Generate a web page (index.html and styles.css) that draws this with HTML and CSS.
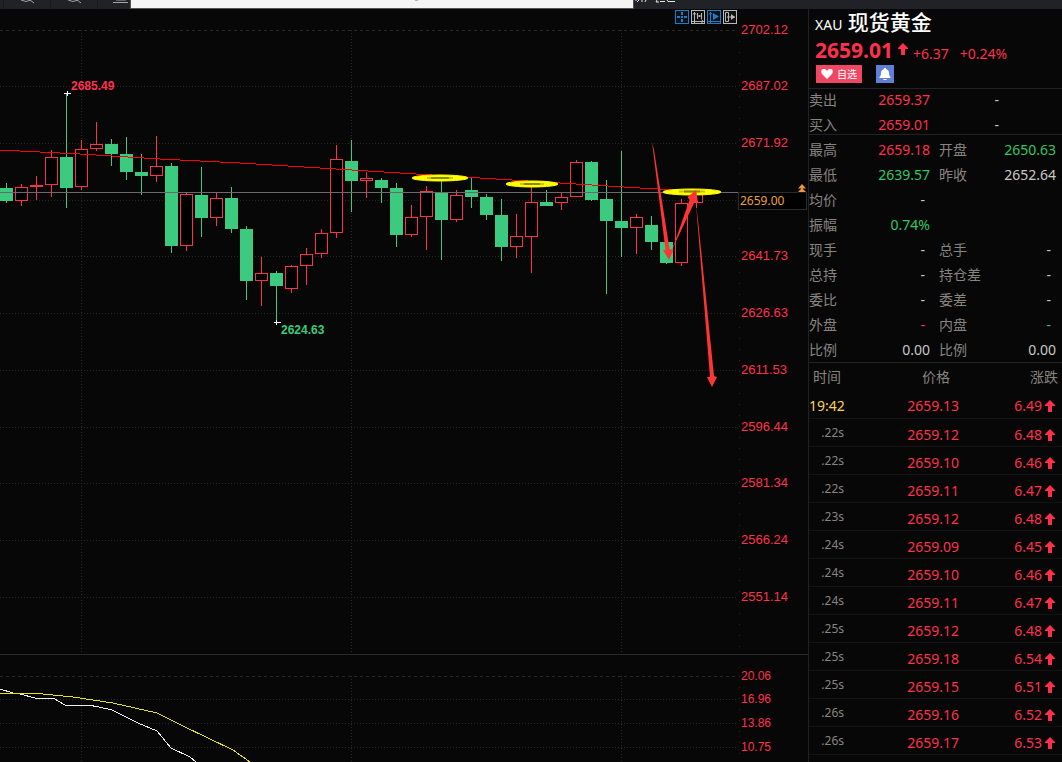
FILE: index.html
```html
<!DOCTYPE html>
<html lang="zh-CN">
<head>
<meta charset="utf-8">
<meta name="viewport" content="width=device-width, initial-scale=1">
<title>XAU 现货黄金</title>
<link rel="stylesheet" href="styles.css">
</head>
<body>
<header class="toolbar">
  <svg class="tools" width="130" height="9" viewBox="0 0 130 9" aria-hidden="true">
    <path class="tool-divider" d="M3.500 0V9M50.500 0V9M97.500 0V9"/>
    <path class="tool-icon" d="M21 0Q26 3 31 0M30 0L34 3M68 0Q73 3 78 0M77 0L81 3M113 2.500H128M116 0H126"/>
  </svg>
  <div class="address"><svg width="8" height="2" aria-hidden="true"><path d="M2 0H5" stroke="#777" fill="none"/></svg></div>
  <svg class="glyph-edge" width="44" height="9" viewBox="0 0 44 9" aria-hidden="true">
    <path d="M2 0V1M5 0L3 2M8 0V2M12 0L11 2M23 0L22 2H25M26 1.500H31M33 0L34 1.500H41" fill="none" stroke="#e8e8e8"/>
  </svg>
</header>
<main class="workspace">
  <section class="chart" aria-label="K线图">
    <svg class="plot" viewBox="0 9 808 753" preserveAspectRatio="xMinYMin meet">
      <g class="grid">
        <path class="dashed" d="M0 30.500H738M0 676.500H738"/>
        <path class="dotted" d="M0 86.500H738M0 143.500H738M0 200.500H738M0 256.500H738M0 313.500H738M0 370.500H738M0 427.500H738M0 483.500H738M0 540.500H738M0 597.500H738M0 699.500H738M0 723.500H738M0 747.500H738"/>
        <path class="dotted" d="M81.500 30V654M351.500 30V654M621.500 30V654M81.500 676V762M351.500 676V762M621.500 676V762"/>
        <path class="sparse" d="M739.500 30V654M739.500 676V762"/>
        <path class="split" d="M0 654.500H808"/>
      </g>
      <g id="candles"></g>
      <polyline class="average" points="0,150 80,154 160,159 240,163 320,168 400,173 560,183 640,188 738,193"/>
      <path class="cross-line" d="M0 192.500H738"/>
      <polyline class="line-fast" points="0,689 13,693 20,694 35,698 53,698 65,705 88,705 99,707 112,710 138,723 157,731 171,748 190,757 196,762"/>
      <polyline class="line-slow" points="0,693 28,693 43,694 73,697 113,703 157,713 183,726 233,750 250,762"/>
      <path class="marker" d="M64 93.500H71M67.500 91V96M274 322.500H281M276.500 320V325"/>
      <text class="peak rise" x="71" y="90">2685.49</text>
      <text class="peak fall" x="281" y="334">2624.63</text>
      <g class="highlight">
        <ellipse cx="440" cy="178" rx="28" ry="3"/><ellipse cx="532" cy="184" rx="26" ry="3"/><ellipse cx="692" cy="192" rx="29" ry="3"/>
        <path d="M427 178H453M520 184H544M679 191.500H705"/>
        <path class="core" d="M431 178H449M524 184H540M684 191.500H700"/>
      </g>
      <path class="arrow" d="M652 142L654 150L669.500 249L673.500 250L669 260L663 250L665.500 250ZM672 250L689.500 200L687.500 197L696 190L698 202L694.500 202ZM696 204L698 220L714 376L717 377L712 387L707 377L710 377Z"/>
      <path class="price-box" d="M738.500 192.500H806V209.500H738.500Z"/>
      <text class="last" x="740" y="205">2659.00</text>
      <path class="chevron" d="M798 188.500L802 184L806 188.500ZM798 192L802 188L806 192Z"/>
      <g class="scale">
        <text x="741" y="34">2702.12</text><text x="741" y="90">2687.02</text><text x="741" y="147">2671.92</text><text x="741" y="260">2641.73</text><text x="741" y="317">2626.63</text><text x="741" y="374">2611.53</text><text x="741" y="431">2596.44</text><text x="741" y="487">2581.34</text><text x="741" y="544">2566.24</text><text x="741" y="601">2551.14</text>
      </g>
      <g class="scale small">
        <text x="741" y="680">20.06</text><text x="741" y="703">16.96</text><text x="741" y="727">13.86</text><text x="741" y="751">10.75</text>
      </g>
    </svg>
    <div class="chart-tools">
      <button class="active" type="button" aria-label="十字光标"><svg viewBox="0 0 12 12"><path d="M6 1V4M6 8V11M1 6H4M8 6H11M5 6H7" stroke-width="2"/></svg></button>
      <button type="button" aria-label="坐标"><svg viewBox="0 0 12 12"><path d="M2.500 1V12M0 10.500H12M1 3.500L2.500 1.500L4 3.500M9.500 8.500L11 10.500L9.500 12M5.500 2V8M9.500 2V8M6 5H9M7.500 4V6"/></svg></button>
      <button class="active" type="button" aria-label="播放"><svg viewBox="0 0 12 12"><path d="M2.500 1V12M0 10.500H12M1 3.500L2.500 1.500L4 3.500"/><path class="solid" d="M5 2L11 5.500L5 9Z"/></svg></button>
      <button type="button" aria-label="右移"><svg viewBox="0 0 12 12"><path d="M1.500 1.500H4.500V10.500H1.500ZM3 6H11"/><path class="solid" d="M7 3L11 6L7 9Z"/></svg></button>
    </div>
  </section>
  <aside class="quote">
    <div class="summary">
      <h1><span>XAU</span> 现货黄金</h1>
      <p class="price"><strong>2659.01</strong><svg class="up" viewBox="0 0 10 12"><path d="M5 0L10 5V6H7V12H3V6H0V5Z"/></svg><span>+6.37</span><span>+0.24%</span></p>
      <div class="actions">
        <button class="favorite" type="button"><svg width="12" height="10" viewBox="0 0 12 10"><path d="M6 10L1 5Q-1 1 2 0Q5 -.5 6 2Q7 -.5 10 0Q13 1 11 5Z" fill="#fff"/></svg>自选</button>
        <button class="alert" type="button" aria-label="提醒"><svg width="12" height="12" viewBox="0 0 12 12"><path d="M5 0H7V1Q10 2 10 5Q10 8 11.500 9V10H.5V9Q2 8 2 5Q2 2 5 1ZM4 11H8L7 12H5Z" fill="#fff"/></svg></button>
      </div>
    </div>
    <dl class="facts bid">
      <dt>卖出</dt><dd class="rise">2659.37</dd><dd class="volume">-</dd>
      <dt>买入</dt><dd class="rise">2659.01</dd><dd class="volume">-</dd>
    </dl>
    <dl class="facts detail">
      <dt>最高</dt><dd class="rise">2659.18</dd><dt class="second">开盘</dt><dd class="fall">2650.63</dd>
      <dt>最低</dt><dd class="fall">2639.57</dd><dt class="second">昨收</dt><dd>2652.64</dd>
      <dt>均价</dt><dd class="none">-</dd>
      <dt>振幅</dt><dd class="fall">0.74%</dd>
      <dt>现手</dt><dd class="none">-</dd><dt class="second">总手</dt><dd class="none">-</dd>
      <dt>总持</dt><dd class="none">-</dd><dt class="second">持仓差</dt><dd class="none">-</dd>
      <dt>委比</dt><dd class="none">-</dd><dt class="second">委差</dt><dd class="none">-</dd>
      <dt>外盘</dt><dd class="none rise">-</dd><dt class="second">内盘</dt><dd class="none fall">-</dd>
      <dt>比例</dt><dd>0.00</dd><dt class="second">比例</dt><dd>0.00</dd>
    </dl>
    <table class="ticks">
      <thead><tr><th>时间</th><th>价格</th><th>涨跌</th></tr></thead>
      <tbody>
        <tr class="minute"><td>19:42</td><td>2659.13</td><td>6.49<svg class="up" viewBox="0 0 10 12"><path d="M5 0L10 5V6H7V12H3V6H0V5Z"/></svg></td></tr>
        <tr><td>.22s</td><td>2659.12</td><td>6.48<svg class="up" viewBox="0 0 10 12"><path d="M5 0L10 5V6H7V12H3V6H0V5Z"/></svg></td></tr>
        <tr><td>.22s</td><td>2659.10</td><td>6.46<svg class="up" viewBox="0 0 10 12"><path d="M5 0L10 5V6H7V12H3V6H0V5Z"/></svg></td></tr>
        <tr><td>.22s</td><td>2659.11</td><td>6.47<svg class="up" viewBox="0 0 10 12"><path d="M5 0L10 5V6H7V12H3V6H0V5Z"/></svg></td></tr>
        <tr><td>.23s</td><td>2659.12</td><td>6.48<svg class="up" viewBox="0 0 10 12"><path d="M5 0L10 5V6H7V12H3V6H0V5Z"/></svg></td></tr>
        <tr><td>.24s</td><td>2659.09</td><td>6.45<svg class="up" viewBox="0 0 10 12"><path d="M5 0L10 5V6H7V12H3V6H0V5Z"/></svg></td></tr>
        <tr><td>.24s</td><td>2659.10</td><td>6.46<svg class="up" viewBox="0 0 10 12"><path d="M5 0L10 5V6H7V12H3V6H0V5Z"/></svg></td></tr>
        <tr><td>.24s</td><td>2659.11</td><td>6.47<svg class="up" viewBox="0 0 10 12"><path d="M5 0L10 5V6H7V12H3V6H0V5Z"/></svg></td></tr>
        <tr><td>.25s</td><td>2659.12</td><td>6.48<svg class="up" viewBox="0 0 10 12"><path d="M5 0L10 5V6H7V12H3V6H0V5Z"/></svg></td></tr>
        <tr><td>.25s</td><td>2659.18</td><td>6.54<svg class="up" viewBox="0 0 10 12"><path d="M5 0L10 5V6H7V12H3V6H0V5Z"/></svg></td></tr>
        <tr><td>.25s</td><td>2659.15</td><td>6.51<svg class="up" viewBox="0 0 10 12"><path d="M5 0L10 5V6H7V12H3V6H0V5Z"/></svg></td></tr>
        <tr><td>.26s</td><td>2659.16</td><td>6.52<svg class="up" viewBox="0 0 10 12"><path d="M5 0L10 5V6H7V12H3V6H0V5Z"/></svg></td></tr>
        <tr><td>.26s</td><td>2659.17</td><td>6.53<svg class="up" viewBox="0 0 10 12"><path d="M5 0L10 5V6H7V12H3V6H0V5Z"/></svg></td></tr>
      </tbody>
    </table>
  </aside>
</main>
<script src="chart.js"></script>
</body>
</html>
```

FILE: styles.css
```css
:root {
  --rise: #ff304c;
  --fall: #32c864;
  --line: #222;
  --label: #888480;
}
* { box-sizing: border-box; }
body {
  margin: 0;
  min-height: 100vh;
  display: flex;
  flex-direction: column;
  background: #070707;
  color: #c8c8c8;
  font: 14px/18px "Noto Sans", "Noto Sans CJK SC", sans-serif;
}
button { border: 0; padding: 0; font: inherit; color: #fff; cursor: pointer; }
.toolbar { display: flex; height: 9px; background: #212227; overflow: hidden; }
.tools { flex: none; }
.tool-divider { stroke: #191a1f; fill: none; }
.tool-icon { stroke: #a4a5aa; fill: none; stroke-width: 1; }
.address {
  flex: 0 1 504px;
  display: flex;
  justify-content: center;
  padding-left: 70px;
  background: #f5f5f5;
  border: solid #555;
  border-width: 0 1px 1px;
}
.workspace { flex: 1; display: flex; align-items: stretch; height: calc(100vh - 9px); overflow: hidden; }
.chart { position: relative; flex: 1; min-width: 0; }
.plot { display: block; width: 100%; }
.grid path { fill: none; stroke: #282828; shape-rendering: crispEdges; }
.grid .dashed { stroke-dasharray: 3 3; }
.grid .dotted { stroke-dasharray: 1 2; }
.grid .sparse { stroke-dasharray: 1 10; }
.wick, .body { shape-rendering: crispEdges; }
.candle-rise { stroke: var(--rise); fill: #000; }
.candle-fall { stroke: #3bca7e; fill: #3bca7e; }
.average { fill: none; stroke: #f00; shape-rendering: crispEdges; }
.cross-line { stroke: #6c686c; shape-rendering: crispEdges; }
.line-fast { fill: none; stroke: #eee; shape-rendering: crispEdges; }
.line-slow { fill: none; stroke: #e4e414; shape-rendering: crispEdges; }
.marker { stroke: #fff; shape-rendering: crispEdges; }
.peak { font: bold 12px "Liberation Sans", sans-serif; }
.peak.rise { fill: var(--rise); }
.peak.fall { fill: #3bca7e; }
.highlight ellipse { fill: #ff0; stroke: #ff0; }
.highlight path { stroke: #c8c400; stroke-width: 2; }
.highlight .core { stroke: #8a8400; }
.arrow { fill: #ff3434; }
.price-box { fill: #000; stroke: #2b2b2b; shape-rendering: crispEdges; }
.last { fill: #f0a03c; font: 12px "Noto Sans", sans-serif; }
.chevron { fill: #f0963c; stroke: #070707; stroke-width: 1; paint-order: stroke; }
.scale { fill: var(--rise); font: 13px "Liberation Sans", sans-serif; }
.scale.small { font-size: 12px; }
.chart-tools { position: absolute; top: 1px; right: 71px; display: flex; gap: 2px; }
.chart-tools button { width: 14px; height: 14px; border: 1px solid; background: #101010; color: #b8b8b8; }
.chart-tools .active { color: #1480d0; }
.chart-tools svg { display: block; width: 12px; height: 12px; fill: none; stroke: currentColor; }
.chart-tools .solid { fill: currentColor; stroke: none; }
.quote { flex: 0 0 254px; border-left: 1px solid var(--line); }
.up { width: 10px; height: 12px; fill: var(--rise); }
.summary { padding: 1px 6px 5px; }
.summary h1 { margin: 0; color: #fff; font-size: 21px; font-weight: 500; line-height: 25px; }
.summary h1 span { font-size: 14px; font-weight: 400; }
.price { display: flex; align-items: flex-start; margin: 0; height: 28px; line-height: 26px; color: var(--rise); }
.price strong { font-size: 21px; }
.price .up { flex: none; margin: 6px 5px 0; }
.price span { padding-top: 4px; }
.price span + span { margin-left: 11px; }
.actions { display: flex; gap: 14px; padding-left: 1px; }
.actions button { display: flex; align-items: center; justify-content: center; gap: 4px; height: 18px; }
.favorite { width: 46px; background: #f04864; font-size: 10px; }
.alert { width: 18px; background: #6080d8; }
.facts { display: grid; margin: 0; row-gap: 7px; border-top: 1px solid var(--line); }
.facts dt { grid-column: 1; color: var(--label); white-space: nowrap; }
.facts .second { grid-column: 3; padding-left: 9px; }
.facts dd { margin: 0; text-align: right; }
.facts .none { padding-right: 5px; }
.facts .rise { color: var(--rise); }
.facts .fall { color: var(--fall); }
.bid { grid-template-columns: 44px 77px 1fr; padding-top: 2px; }
.bid .volume { padding-right: 63px; }
.detail { grid-template-columns: 44px 77px 61px 1fr; padding: 6px 6px 3px 0; }
.ticks { width: 100%; table-layout: fixed; border-collapse: collapse; border-top: 1px solid var(--line); }
.ticks th { height: 28px; padding: 0 4px; color: var(--label); font-weight: 400; text-align: left; }
.ticks th:first-child { width: 50px; }
.ticks th:nth-child(2) { width: 100px; padding-right: 9px; text-align: right; }
.ticks th:last-child { text-align: right; }
.ticks td { height: 28px; padding: 4px 0 0; border-bottom: 1px solid #141414; color: var(--rise); text-align: right; }
.ticks td:first-child { padding: 0 15px 0 0; color: var(--label); font-size: 12px; }
.ticks .minute td:first-child { padding-top: 4px; color: #ffd250; font-size: 14px; }
.ticks td:last-child { padding-right: 7px; }
.ticks .up { margin-left: 3px; vertical-align: -1px; }
```

FILE: chart.js
```js
// Each candle: direction, high, body top, body bottom, low (plot units).
const candles = `
f 183 188 201 203|r 184 187 201 206|r 176 185 187 200|r 150 157 185 197|f 93 157 188 208
r 140 149 187 190|r 122 144 149 151|f 139 144 154 166|f 137 154 172 180|f 154 172 176 195
r 136 166 176 182|f 163 166 246 253|r 192 194 246 251|f 167 195 218 237|r 193 198 218 226
f 187 198 229 233|f 226 229 281 300|r 257 273 281 306|f 271 273 286 322|r 265 266 289 293
r 248 254 266 285|r 229 233 254 258|r 145 159 233 238|f 140 161 181 212|r 172 178 181 198
f 178 180 188 203|f 183 188 235 247|r 205 217 235 237|r 186 191 217 250|f 177 192 220 260
r 190 195 220 222|f 178 190 197 208|f 194 197 215 220|f 199 215 247 261|r 214 236 247 258
r 182 202 237 273|f 190 202 206 206|r 193 197 203 210|r 160 162 197 197|f 161 162 200 201
f 180 199 221 294|f 151 221 228 257|r 214 217 228 254|f 216 225 242 250|f 242 242 263 264
r 199 203 263 266|r 190 193 203 208`.trim().split(/[|\n]/).map(row => row.trim().split(" "));

const pitch = 15;
document.getElementById("candles").innerHTML = candles.map(([kind, ...levels], i) => {
  const [high, top, bottom, low] = levels.map(Number);
  const x = 6 + i * pitch;
  const name = kind === "r" ? "candle-rise" : "candle-fall";
  return `<g class="${name}"><path class="wick" d="M${x + 0.5} ${high}V${low}"/>` +
    `<rect class="body" x="${x - 5.5}" y="${top + 0.5}" width="12" height="${bottom - top - 1}"/></g>`;
}).join("");
```
